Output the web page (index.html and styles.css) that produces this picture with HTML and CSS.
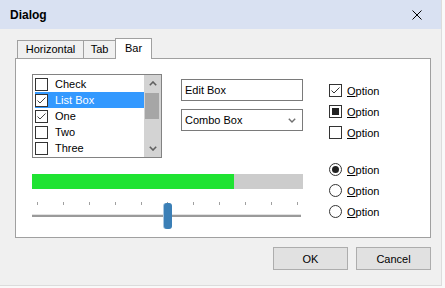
FILE: index.html
```html
<!DOCTYPE html>
<html>
<head>
<meta charset="utf-8">
<link rel="stylesheet" href="styles.css">
</head>
<body>
<div class="window">
  <div class="titlebar">
    <span class="title">Dialog</span>
    <svg class="close" width="10" height="10" viewBox="0 0 10 10"><path d="M0.5 0.5 L9.5 9.5 M9.5 0.5 L0.5 9.5" stroke="#000" stroke-width="1" fill="none"/></svg>
  </div>
  <div class="content">
    <div class="tabs">
      <div class="tab w-h">Horizontal</div>
      <div class="tab w-t">Tab</div>
      <div class="tab active w-b">Bar</div>
    </div>
    <div class="panel">
      <div class="left">
        <div class="toprow">
          <div class="listbox">
            <ul class="items">
              <li class="item"><span class="cb"></span>Check</li>
              <li class="item sel"><span class="cb"><svg width="11" height="11" viewBox="0 0 11 11"><polyline points="1.5,5.5 4,8 9.5,2.5" fill="none" stroke="#444" stroke-width="1"/></svg></span>List Box</li>
              <li class="item"><span class="cb"><svg width="11" height="11" viewBox="0 0 11 11"><polyline points="1.5,5.5 4,8 9.5,2.5" fill="none" stroke="#444" stroke-width="1"/></svg></span>One</li>
              <li class="item"><span class="cb"></span>Two</li>
              <li class="item"><span class="cb"></span>Three</li>
            </ul>
            <div class="scrollbar">
              <div class="arrow"><svg width="8" height="5" viewBox="0 0 8 5"><polyline points="0.8,4.2 4,1 7.2,4.2" fill="none" stroke="#606060" stroke-width="1.6"/></svg></div>
              <div class="sthumb"></div>
              <div class="strack"></div>
              <div class="arrow"><svg width="8" height="5" viewBox="0 0 8 5"><polyline points="0.8,0.8 4,4 7.2,0.8" fill="none" stroke="#606060" stroke-width="1.6"/></svg></div>
            </div>
          </div>
          <div class="fields">
            <div class="edit">Edit Box</div>
            <div class="combo"><span>Combo Box</span><svg width="8" height="5" viewBox="0 0 8 5"><polyline points="0.8,0.8 4,4 7.2,0.8" fill="none" stroke="#707070" stroke-width="1.4"/></svg></div>
          </div>
        </div>
        <div class="progress"><div class="fill" style="width:202px"></div></div>
        <div class="slider">
          <div class="ticks"><span></span><span></span><span></span><span></span><span></span><span></span><span></span><span></span><span></span><span></span><span></span></div>
          <div class="track"></div>
          <div class="thumb"></div>
        </div>
      </div>
      <div class="right">
        <div class="opt"><span class="box"><svg width="11" height="11" viewBox="0 0 11 11"><polyline points="1.5,5.5 4,8 9.5,2.5" fill="none" stroke="#333" stroke-width="1"/></svg></span><span><u>O</u>ption</span></div>
        <div class="opt"><span class="box"><span class="square"></span></span><span><u>O</u>ption</span></div>
        <div class="opt"><span class="box"></span><span><u>O</u>ption</span></div>
        <div class="spacer"></div>
        <div class="opt"><span class="radio"><span class="dot"></span></span><span><u>O</u>ption</span></div>
        <div class="opt"><span class="radio"></span><span><u>O</u>ption</span></div>
        <div class="opt"><span class="radio"></span><span><u>O</u>ption</span></div>
      </div>
    </div>
    <div class="buttons">
      <button class="btn">OK</button>
      <button class="btn">Cancel</button>
    </div>
  </div>
</div>
</body>
</html>
```
FILE: styles.css
```css
* { box-sizing: border-box; }
body {
  margin: 0;
  background: #f9f9f9;
  font-family: "Liberation Sans", Arial, sans-serif;
  font-size: 11px;
  color: #000;
}
.window {
  width: 442px;
  height: 286px;
  background: #f0f0f0;
  border-right: 1px solid #dcdcdc;
  border-bottom: 1px solid #dcdcdc;
  display: flex;
  flex-direction: column;
}
.titlebar {
  height: 29px;
  background: #d9e1f2;
  display: flex;
  align-items: center;
  justify-content: space-between;
  padding: 0 19px 0 10px;
  flex: none;
}
.title { font-weight: bold; font-size: 12px; }
.close { display: block; }
.content { padding: 9px 10px 0 15px; }
.tabs {
  display: flex;
  align-items: flex-end;
  height: 20px;
  padding-left: 2px;
}
.tab {
  height: 18px;
  border: 1px solid #a0a0a0;
  border-bottom: none;
  background: #f0f0f0;
  text-align: center;
  line-height: 17px;
  margin-right: -1px;
}
.tab.active {
  height: 21px;
  margin-bottom: -1px;
  background: #fff;
  line-height: 19px;
  position: relative;
  z-index: 1;
}
.w-h { width: 67px; }
.w-t { width: 33px; }
.w-b { width: 37px; }
.panel {
  height: 180px;
  border: 1px solid #a0a0a0;
  background: #fff;
  display: flex;
  padding: 15px 0 0 16px;
}
.left { width: 271px; flex: none; }
.toprow { display: flex; }
.listbox {
  width: 130px;
  height: 84px;
  border: 1px solid #828282;
  display: flex;
  background: #fff;
}
.items {
  width: 111px;
  list-style: none;
  margin: 0;
  padding: 1px 0 0 2px;
}
.item {
  height: 16px;
  display: flex;
  align-items: center;
}
.item.sel { background: #3399ff; color: #fff; }
.cb, .box {
  width: 13px;
  height: 13px;
  border: 1px solid #333;
  background: #fff;
  flex: none;
  display: flex;
  align-items: center;
  justify-content: center;
}
.cb { margin-right: 7px; }
.cb svg, .box svg { display: block; }
.scrollbar {
  width: 17px;
  background: #d3d3d3;
  display: flex;
  flex-direction: column;
}
.arrow {
  height: 17px;
  display: flex;
  align-items: center;
  justify-content: center;
  flex: none;
}
.arrow svg { display: block; }
.sthumb {
  height: 26px;
  margin: 1px 2px 0 1px;
  background: #a6a6a6;
  flex: none;
}
.strack { flex: 1; }
.fields {
  margin-left: 19px;
  width: 122px;
  padding-top: 5px;
}
.edit, .combo {
  height: 22px;
  border: 1px solid #7a7a7a;
  background: #fff;
  padding-left: 3px;
  line-height: 20px;
}
.combo {
  margin-top: 8px;
  display: flex;
  justify-content: space-between;
  align-items: center;
  padding-right: 6px;
}
.combo svg { display: block; }
.progress {
  margin-top: 16px;
  height: 15px;
  background: #cccccc;
}
.fill { height: 100%; background: #1fe332; }
.slider {
  position: relative;
  margin-top: 13px;
  height: 28px;
}
.ticks {
  display: flex;
  justify-content: space-between;
  margin-left: 5px;
  width: 261px;
  height: 3px;
}
.ticks span { width: 1px; height: 3px; background: #a0a0a0; }
.track {
  margin-top: 9px;
  width: 269px;
  height: 3px;
  border-top: 1px solid #e2e2e2;
  background: #9a9a9a;
}
.thumb {
  position: absolute;
  left: 132px;
  top: 1px;
  width: 8px;
  height: 26px;
  background: #3b7fb6;
  border-radius: 3px;
  box-shadow: -1px 0 0 #a7c6e0;
}
.right { margin-left: 26px; padding-top: 6px; }
.opt {
  height: 21px;
  display: flex;
  align-items: center;
}
.opt .box, .opt .radio { margin-right: 5px; }
.square { width: 7px; height: 7px; background: #222; }
.spacer { height: 16px; }
.radio {
  width: 13px;
  height: 13px;
  border: 1px solid #333;
  border-radius: 50%;
  background: #fff;
  flex: none;
  display: flex;
  align-items: center;
  justify-content: center;
}
.dot { width: 7px; height: 7px; border-radius: 50%; background: #222; }
.buttons {
  display: flex;
  justify-content: flex-end;
  gap: 8px;
  margin-top: 9px;
}
.btn {
  width: 75px;
  height: 23px;
  background: #e1e1e1;
  border: 1px solid #adadad;
  font: inherit;
  color: #000;
  padding: 0;
}
```
